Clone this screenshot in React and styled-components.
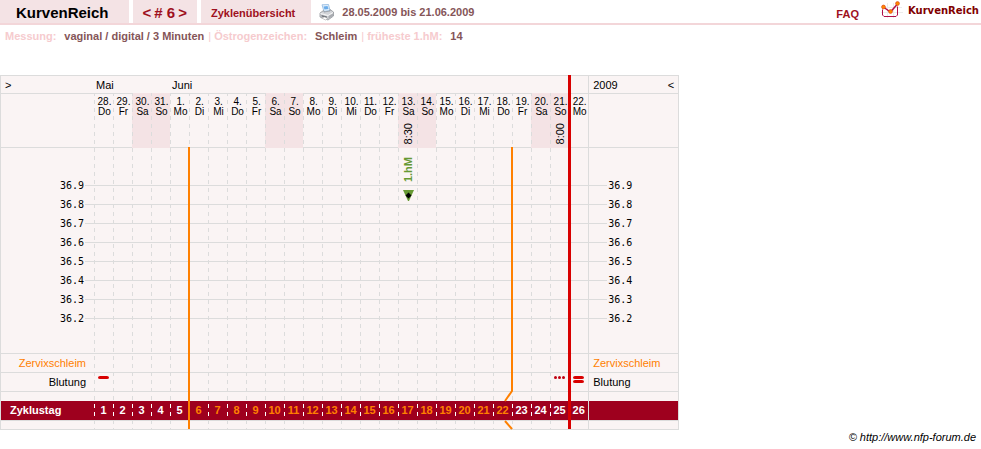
import styled, { createGlobalStyle } from "styled-components"

const GlobalStyle = createGlobalStyle`
  * {
    box-sizing: border-box;
  }
  body {
    margin: 0;
    background: #fff;
    color: #000;
    font: 11px/14px "Liberation Sans", Arial, sans-serif;
  }
`

const Header = styled.header`
  display: flex;
  height: 25px;
  border-bottom: 2px solid #f3d6d9;
  font-weight: bold;
`

const Tabs = styled.nav`
  display: flex;
  gap: 4px;
`

const Tab = styled.div`
  display: flex;
  align-items: center;
  gap: 3px;
  padding: 2px ${(p) => p.$end || p.$pad}px 0 ${(p) => p.$pad}px;
  background: #f4e3e5;
  color: #9e1020;
  font-size: ${(p) => (p.$big ? 15 : 11)}px;
`

const Title = styled.h1`
  margin: 0;
  color: #000;
  font-size: 15px;
  line-height: 20px;
`

const TextLink = styled.a`
  color: #9e1020;
  text-decoration: none;
`

const Period = styled.div`
  display: flex;
  align-items: center;
  gap: 7px;
  padding: 1px 0 0 8px;
  color: #855558;
`

const PrintButton = styled.button`
  display: flex;
  padding: 0;
  border: 0;
  background: none;
  cursor: pointer;
`

const HeaderRight = styled.div`
  display: flex;
  align-items: flex-start;
  gap: 22px;
  margin-left: auto;
  padding-right: 2px;
`

const FaqLink = styled(TextLink)`
  padding-top: 7px;
`

const Brand = styled.a`
  display: flex;
  gap: 5px;
  color: #800000;
  font: bold 10px/21px "DejaVu Sans", Verdana, sans-serif;
  text-decoration: none;
`

const Settings = styled.dl`
  display: flex;
  margin: 0;
  padding: 4px 5px 0;
  color: #f6cbce;
  font-weight: bold;
`

const Setting = styled.div`
  display: flex;
  gap: 8px;

  & + &::before {
    content: "|";
    padding-left: 4px;
    margin-right: -5px;
    font-weight: normal;
  }
  dd {
    margin: 0;
    color: #855558;
  }
`

const ChartScroll = styled.main`
  margin-top: 32px;
  overflow-x: auto;
`

const Chart = styled.div`
  position: relative;
  width: max-content;
`

const Lines = styled.svg`
  position: absolute;
  top: 0;
  left: 0;
  pointer-events: none;
`

const Sheet = styled.table`
  table-layout: fixed;
  width: 679px;
  border-spacing: 0;
  border-bottom: 1px solid #dcdcdc;
  background: #faf4f4;

  th,
  td {
    padding: 0;
    border-top: 1px solid #dcdcdc;
    font-weight: normal;
    text-align: left;
    vertical-align: top;
  }
  tr > :first-child {
    border-left: 1px solid #dcdcdc;
  }
  tr > :last-child {
    border-left: 1px solid #dcdcdc;
    border-right: 1px solid #dcdcdc;
  }
`

const Col = styled.col`
  width: ${(p) => p.$width}px;
`

const Row = styled.tr`
  height: ${(p) => p.$height}px;
`

const CycleRow = styled(Row)`
  background: #9e001e;
  color: #fff;
  font-weight: bold;

  && > * {
    border-top: 0;
    font-weight: bold;
    line-height: 19px;
  }
  && > td {
    text-align: center;
  }
`

const CycleDay = styled.td`
  color: ${(p) => (p.$fertile ? "#ff8000" : "#fff")};
`

const DayHead = styled.th`
  && {
    background: ${(p) => (p.$weekend ? "#f4e3e5" : "none")};
    border-top-color: ${(p) => (p.$weekend ? "#f4e3e5" : "#dcdcdc")};
  }
`

const DayLabel = styled.div`
  display: flex;
  flex-direction: column;
  align-items: center;
  height: 53px;
  padding: 3px 0 3px 2px;
  font-size: 10px;
  line-height: 10px;
`

const Time = styled.time`
  margin: auto 2px 0 0;
  font-size: 11px;
  line-height: 12px;
  writing-mode: vertical-rl;
  transform: rotate(180deg);
`

const PlotCell = styled.td`
  && {
    border-top-color: ${(p) => (p.$weekend ? "#f4e3e5" : "#dcdcdc")};
  }
`

const Marker = styled.div`
  display: flex;
  flex-direction: column;
  align-items: center;
  gap: 8px;
  padding: 9px 0 0 1px;
`

const MarkerText = styled.span`
  color: #669933;
  font-weight: bold;
  line-height: 12px;
  writing-mode: vertical-rl;
  transform: rotate(180deg);
`

const Scale = styled.ul`
  margin: 0;
  padding: ${(p) => (p.$right ? "28px 0 0 19px" : "28px 10px 0 0")};
  list-style: none;
  text-align: ${(p) => (p.$right ? "left" : "right")};
  font: 10px/19px "DejaVu Sans Mono", monospace;
`

const MonthRow = styled.div`
  display: flex;
  justify-content: space-between;
  padding: 2px 4px 0;
`

const Month = styled.div`
  padding: 2px 0 0 2px;
`

const NavButton = styled.button`
  padding: 0;
  border: 0;
  background: none;
  font: 11px/14px "Liberation Sans", Arial, sans-serif;
  cursor: pointer;
`

const RowLabel = styled.div`
  padding: 1px ${(p) => (p.$right ? 4 : 8)}px 0;
  line-height: 16px;
  text-align: ${(p) => (p.$right ? "left" : "right")};
  color: ${(p) => (p.$orange ? "#ff8000" : "inherit")};
`

const CycleLabel = styled.div`
  padding-left: 9px;
`

const Bleeding = styled.svg`
  display: block;
  margin: 3px 0 0 4px;
`

const Footer = styled.footer`
  padding: 0 5px;
  text-align: right;
  font-style: italic;

  a {
    color: #000;
    text-decoration: none;
  }
`

const WEEKDAYS = ["Do", "Fr", "Sa", "So", "Mo", "Di", "Mi"]
const TIMES = { 17: "8:30", 25: "8:00" }
const TEMPS = ["36.9", "36.8", "36.7", "36.6", "36.5", "36.4", "36.3", "36.2"]

// 28 May is cycle day 1
const days = Array.from({ length: 26 }, (_, i) => {
    const weekday = WEEKDAYS[i % 7]
    return {
        cycle: i + 1,
        date: i < 4 ? 28 + i : i - 3,
        weekday,
        weekend: weekday === "Sa" || weekday === "So",
        fertile: i >= 5 && i <= 21,
    }
})

const PrinterIcon = () => (
    <svg width="16" height="17" viewBox="0 0 16 17" aria-hidden="true">
        <path d="M3 .8L9.500.5 11 6.500 5 7.500z" fill="#e3f0fb" stroke="#8fb8de" strokeWidth=".8" />
        <path d="M4.500 2.500L8.500 2 9.500 5 5.500 5.500z" fill="#6aacea" />
        <path d="M1 9l3.500-2.500L5 8l6-1V5.500L14.500 8v4L9 16 1 13z" fill="#d2d4d8" stroke="#92959b" strokeWidth=".8" />
        <path d="M1.500 9.500L9 11.500 14 8.500" fill="none" stroke="#f7f7f7" />
        <path d="M2.500 11L8 12.500V14L2.500 12.500z" fill="#6c7076" />
        <path d="M9.500 12L14 9.500V12L9.500 15z" fill="#a9acb1" />
        <path d="M2.500 14L5.500 13 9 14.500 6.500 16z" fill="#fff" stroke="#a8a8a8" strokeWidth=".6" />
    </svg>
)

const BrandIcon = () => (
    <svg width="22" height="20" viewBox="0 0 22 20" aria-hidden="true">
        <path d="M0 12.500h22M6.500 3v15M12.500 3v15M4 7.500h17" stroke="#ececec" />
        <path d="M1.500 9.500V15L3 16.500H15L16.500 15V6.500" fill="none" stroke="#b0104a" />
        <path d="M3 7.500l6.500 4.500 7-8" fill="none" stroke="#b0104a" strokeWidth="1.500" />
        <g fill="#ff8a00" stroke="#e04a18" strokeWidth=".7">
            <circle cx="2.500" cy="7" r="1.900" />
            <circle cx="9.500" cy="11.500" r="1.900" />
            <circle cx="16.500" cy="3.500" r="1.900" />
        </g>
    </svg>
)

const BleedingMark = ({ day }) => {
    if (day === 1)
        return (
            <Bleeding width="11" height="7" role="img" aria-label="leicht">
                <rect y="0" width="11" height="3" rx="2" ry="1.500" fill="#d80000" />
            </Bleeding>
        )
    if (day === 25)
        return (
            <Bleeding width="11" height="7" role="img" aria-label="Schmierblutung">
                {[1.5, 5.5, 9.5].map((x) => (
                    <circle key={x} cx={x} cy="1.500" r="1.500" fill="#c00010" />
                ))}
            </Bleeding>
        )
    if (day === 26)
        return (
            <Bleeding width="11" height="7" role="img" aria-label="mittel">
                <rect y="0" width="11" height="3" rx="2" ry="1.500" fill="#d80000" />
                <rect y="4" width="11" height="3" rx="2" ry="1.500" fill="#d80000" />
            </Bleeding>
        )
    return null
}

const ChartLines = () => (
    <Lines width="679" height="355" aria-hidden="true">
        <g stroke="#dcdcdc">
            {TEMPS.map((t, i) => (
                <line key={t} x1="85" x2="607" y1={110.5 + i * 19} y2={110.5 + i * 19} />
            ))}
        </g>
        {days.map((d, i) => {
            const x = 94.5 + i * 19
            return (
                <g key={d.cycle} strokeDasharray="4 4" stroke="#dcdcdc">
                    <line x1={x} x2={x} y1="18" y2="354" strokeDashoffset="1" />
                    <line x1={x} x2={x} y1="329" y2="344" stroke="#fff" />
                </g>
            )
        })}
        <g fill="none" stroke="#ff8000" strokeWidth="2">
            <path d="M189 72V354" />
            <path d="M512 72V316L505 326M505 346L512 354" />
        </g>
        <path d="M569.500 0V354" stroke="#d80000" strokeWidth="3" />
    </Lines>
)

const App = () => {
    return (
        <>
            <GlobalStyle />
            <Header>
                <Tabs>
                    <Tab $pad={16} $end={20}>
                        <Title>KurvenReich</Title>
                    </Tab>
                    <Tab $pad={10} $big>
                        <TextLink href="#prev" aria-label="Vorheriger Zyklus">&lt;</TextLink>
                        <span># 6</span>
                        <TextLink href="#next" aria-label="Nächster Zyklus">&gt;</TextLink>
                    </Tab>
                    <Tab $pad={10} $end={16}>
                        <TextLink href="#cycles">Zyklenübersicht</TextLink>
                    </Tab>
                </Tabs>
                <Period>
                    <PrintButton type="button" aria-label="Drucken">
                        <PrinterIcon />
                    </PrintButton>
                    28.05.2009 bis 21.06.2009
                </Period>
                <HeaderRight>
                    <FaqLink href="#faq">FAQ</FaqLink>
                    <Brand href="#home">
                        <BrandIcon />
                        KurvenReich
                    </Brand>
                </HeaderRight>
            </Header>
            <Settings>
                <Setting>
                    <dt>Messung:</dt>
                    <dd>vaginal / digital / 3 Minuten</dd>
                </Setting>
                <Setting>
                    <dt>Östrogenzeichen:</dt>
                    <dd>Schleim</dd>
                </Setting>
                <Setting>
                    <dt>früheste 1.hM:</dt>
                    <dd>14</dd>
                </Setting>
            </Settings>
            <ChartScroll>
                <Chart>
                    <Sheet>
                        <colgroup>
                            <Col $width={94} />
                            {days.map((d) => <Col key={d.cycle} $width={19} />)}
                            <Col $width={91} />
                        </colgroup>
                        <tbody>
                            <Row $height={18}>
                                <td>
                                    <MonthRow>
                                        <NavButton type="button" aria-label="Vor">&gt;</NavButton>
                                    </MonthRow>
                                </td>
                                <th colSpan={4} scope="colgroup"><Month>Mai</Month></th>
                                <th colSpan={22} scope="colgroup"><Month>Juni</Month></th>
                                <td>
                                    <MonthRow>
                                        <span>2009</span>
                                        <NavButton type="button" aria-label="Zurück">&lt;</NavButton>
                                    </MonthRow>
                                </td>
                            </Row>
                            <Row $height={54}>
                                <td />
                                {days.map((d) => (
                                    <DayHead key={d.cycle} scope="col" $weekend={d.weekend}>
                                        <DayLabel>
                                            <span>{d.date}.</span>
                                            <span>{d.weekday}</span>
                                            {TIMES[d.cycle] && <Time>{TIMES[d.cycle]}</Time>}
                                        </DayLabel>
                                    </DayHead>
                                ))}
                                <td />
                            </Row>
                            <Row $height={206}>
                                <td>
                                    <Scale>{TEMPS.map((t) => <li key={t}>{t}</li>)}</Scale>
                                </td>
                                {days.map((d) => (
                                    <PlotCell key={d.cycle} $weekend={d.weekend}>
                                        {d.cycle === 17 && (
                                            <Marker>
                                                <MarkerText>1.hM</MarkerText>
                                                <svg width="11" height="11" aria-hidden="true">
                                                    <path d="M0 0H11L6 11H5Z" fill="#669933" />
                                                    <path d="M5.500 2.500L8.500 5.500 5.500 8.500 2.500 5.500Z" fill="#000" />
                                                </svg>
                                            </Marker>
                                        )}
                                    </PlotCell>
                                ))}
                                <td>
                                    <Scale $right>{TEMPS.map((t) => <li key={t}>{t}</li>)}</Scale>
                                </td>
                            </Row>
                            <Row $height={19}>
                                <th scope="row"><RowLabel $orange>Zervixschleim</RowLabel></th>
                                {days.map((d) => <td key={d.cycle} />)}
                                <td><RowLabel $right $orange>Zervixschleim</RowLabel></td>
                            </Row>
                            <Row $height={19}>
                                <th scope="row"><RowLabel>Blutung</RowLabel></th>
                                {days.map((d) => (
                                    <td key={d.cycle}><BleedingMark day={d.cycle} /></td>
                                ))}
                                <td><RowLabel $right>Blutung</RowLabel></td>
                            </Row>
                            <Row $height={10}>
                                <td />
                                <td colSpan={26} />
                                <td />
                            </Row>
                            <CycleRow $height={19}>
                                <th scope="row"><CycleLabel>Zyklustag</CycleLabel></th>
                                {days.map((d) => (
                                    <CycleDay key={d.cycle} $fertile={d.fertile}>{d.cycle}</CycleDay>
                                ))}
                                <td />
                            </CycleRow>
                            <Row $height={9}>
                                <td />
                                <td colSpan={26} />
                                <td />
                            </Row>
                        </tbody>
                    </Sheet>
                    <ChartLines />
                </Chart>
            </ChartScroll>
            <Footer>
                <a href="#forum">© http://www.nfp-forum.de</a>
            </Footer>
        </>
    )
}

export default App
